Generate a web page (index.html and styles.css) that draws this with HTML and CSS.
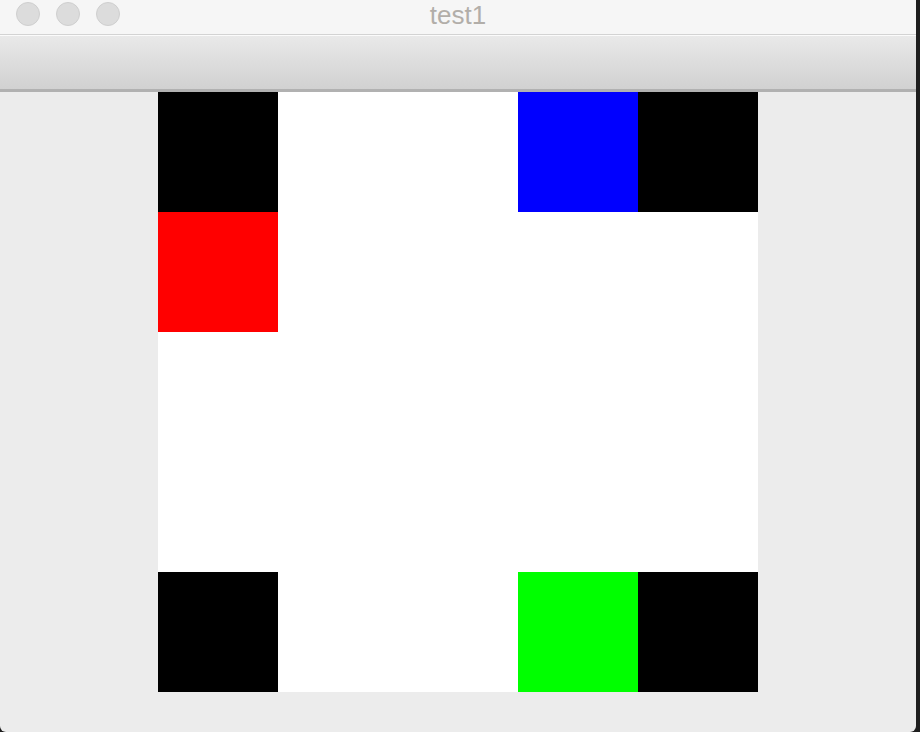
FILE: index.html
```html
<!DOCTYPE html>
<html>
<head>
<meta charset="utf-8">
<title>test1</title>
<link rel="stylesheet" href="styles.css">
</head>
<body>
<div class="window">
  <div class="titlebar">
    <div class="lights">
      <span class="light"></span>
      <span class="light"></span>
      <span class="light"></span>
    </div>
    <div class="title">test1</div>
  </div>
  <div class="toolbar"></div>
  <div class="content">
    <div class="grid">
      <div class="c black"></div><div class="c"></div><div class="c"></div><div class="c blue"></div><div class="c black"></div>
      <div class="c red"></div><div class="c"></div><div class="c"></div><div class="c"></div><div class="c"></div>
      <div class="c"></div><div class="c"></div><div class="c"></div><div class="c"></div><div class="c"></div>
      <div class="c"></div><div class="c"></div><div class="c"></div><div class="c"></div><div class="c"></div>
      <div class="c black"></div><div class="c"></div><div class="c"></div><div class="c green"></div><div class="c black"></div>
    </div>
  </div>
</div>
</body>
</html>
```
FILE: styles.css
```css
html, body {
  margin: 0;
  padding: 0;
  background: #1e1e1e;
  width: 920px;
  height: 732px;
  overflow: hidden;
}
.window {
  width: 916px;
  height: 732px;
  background: #ececec;
  border-radius: 0 0 6px 6px;
  overflow: hidden;
  display: flex;
  flex-direction: column;
}
.titlebar {
  height: 34px;
  background: #f6f6f6;
  border-bottom: 1px solid #d3d3d3;
  position: relative;
  display: flex;
  align-items: center;
  justify-content: center;
}
.lights {
  position: absolute;
  left: 16px;
  top: 2px;
  display: flex;
  gap: 16px;
}
.light {
  width: 22px;
  height: 22px;
  border-radius: 50%;
  background: #dcdcdc;
  border: 1px solid #cfcfcf;
}
.title {
  font-family: "Helvetica Neue", "Liberation Sans", Arial, sans-serif;
  font-size: 26px;
  color: #b2aea9;
  margin-left: 0;
  margin-top: -4px;
}
.toolbar {
  height: 53px;
  border-top: 1px solid #fbfbfb;
  background: linear-gradient(to bottom, #e9e9e9, #d1d1d1);
  border-bottom: 3px solid #b1b1b1;
}
.content {
  flex: 1;
  display: flex;
  justify-content: center;
  align-items: flex-start;
}
.grid {
  display: grid;
  grid-template-columns: repeat(5, 120px);
  grid-template-rows: repeat(5, 120px);
  background: #ffffff;
}
.c { background: #ffffff; }
.black { background: #000000; }
.blue { background: #0000ff; }
.red { background: #ff0000; }
.green { background: #00ff00; }
```
